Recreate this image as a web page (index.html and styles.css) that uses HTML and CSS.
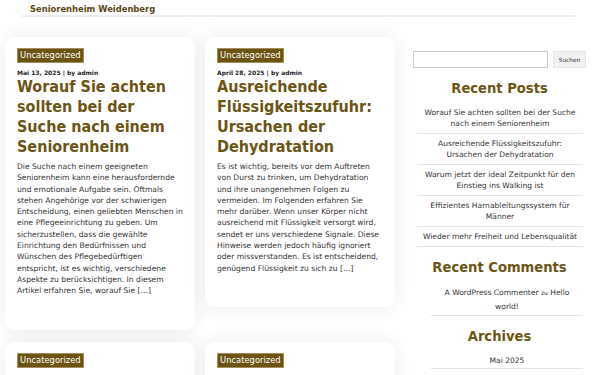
FILE: index.html
```html
<!DOCTYPE html>
<html>
<head>
  <meta charset="utf-8">
  <link rel="stylesheet" href="styles.css">
</head>
<body>
  <header class="site-header">
    <a class="site-title">Seniorenheim Weidenberg</a>
  </header>

  <div class="wrap">
    <main class="posts">
      <article class="card">
        <a class="cat">Uncategorized</a>
        <div class="meta">Mai 13, 2025 | by admin</div>
        <h2 class="post-title">Worauf Sie achten sollten bei der Suche nach einem Seniorenheim</h2>
        <p class="excerpt">Die Suche nach einem geeigneten Seniorenheim kann eine herausfordernde und emotionale Aufgabe sein. Oftmals stehen Angehörige vor der schwierigen Entscheidung, einen geliebten Menschen in eine Pflegeeinrichtung zu geben. Um sicherzustellen, dass die gewählte Einrichtung den Bedürfnissen und Wünschen des Pflegebedürftigen entspricht, ist es wichtig, verschiedene Aspekte zu berücksichtigen. In diesem Artikel erfahren Sie, worauf Sie […]</p>
      </article>

      <article class="card">
        <a class="cat">Uncategorized</a>
        <div class="meta">April 28, 2025 | by admin</div>
        <h2 class="post-title">Ausreichende Flüssigkeitszufuhr: Ursachen der Dehydratation</h2>
        <p class="excerpt">Es ist wichtig, bereits vor dem Auftreten von Durst zu trinken, um Dehydratation und ihre unangenehmen Folgen zu vermeiden. Im Folgenden erfahren Sie mehr darüber. Wenn unser Körper nicht ausreichend mit Flüssigkeit versorgt wird, sendet er uns verschiedene Signale. Diese Hinweise werden jedoch häufig ignoriert oder missverstanden. Es ist entscheidend, genügend Flüssigkeit zu sich zu […]</p>
      </article>

      <article class="card">
        <a class="cat">Uncategorized</a>
        <div class="meta">April 14, 2025 | by admin</div>
        <h2 class="post-title">Warum jetzt der ideal Zeitpunkt für den Einstieg ins Walking ist</h2>
      </article>

      <article class="card">
        <a class="cat">Uncategorized</a>
        <div class="meta">März 30, 2025 | by admin</div>
        <h2 class="post-title">Effizientes Harnableitungssystem für Männer</h2>
      </article>
    </main>

    <aside class="sidebar">
      <form class="search">
        <input type="text" class="search-field">
        <button type="button" class="search-btn">Suchen</button>
      </form>

      <h3 class="widget-title">Recent Posts</h3>
      <ul class="widget-list">
        <li>Worauf Sie achten sollten bei der Suche nach einem Seniorenheim</li>
        <li>Ausreichende Flüssigkeitszufuhr: Ursachen der Dehydratation</li>
        <li>Warum jetzt der ideal Zeitpunkt für den Einstieg ins Walking ist</li>
        <li>Effizientes Harnableitungssystem für Männer</li>
        <li>Wieder mehr Freiheit und Lebensqualität</li>
      </ul>

      <h3 class="widget-title">Recent Comments</h3>
      <ul class="widget-list inset">
        <li class="comment">A WordPress Commenter <span class="small">zu</span> Hello world!</li>
      </ul>

      <h3 class="widget-title">Archives</h3>
      <ul class="widget-list inset">
        <li>Mai 2025</li>
        <li>April 2025</li>
      </ul>
    </aside>
  </div>
</body>
</html>
```

FILE: styles.css
```css
body {
  margin: 0;
  background: #fff;
  font-family: "DejaVu Sans", sans-serif;
  color: #333;
  overflow: hidden;
}
.site-header {
  margin: 0 25px 0 22px;
  padding: 4px 8px 0;
  border-bottom: 2px solid #eee;
}
.site-title {
  display: block;
  font-size: 8.4px;
  line-height: 11px;
  font-weight: bold;
  color: #5a4816;
}
.wrap {
  display: flex;
  padding: 20px 14px 0 5px;
  gap: 18px;
}
.posts {
  width: 390px;
  flex: none;
  display: grid;
  grid-template-columns: 190px 190px;
  column-gap: 10px;
  row-gap: 12px;
  align-items: start;
}
.card {
  background: #fff;
  border-radius: 10px;
  box-shadow: 0 0 20px rgba(40, 40, 80, 0.09);
  padding: 11px 10px 33px 12px;
}
.cat {
  display: block;
  width: fit-content;
  background: #6b5412;
  border: 1px solid #a3905c;
  color: #fff;
  font-size: 8.4px;
  line-height: 13px;
  padding: 0 2px;
}
.meta {
  font-size: 6px;
  font-weight: bold;
  color: #222;
  margin-top: 6px;
  line-height: 8px;
}
.post-title {
  font-family: "DejaVu Sans Condensed", "DejaVu Sans", sans-serif;
  font-stretch: condensed;
  font-size: 16px;
  line-height: 20px;
  font-weight: bold;
  color: #6b5514;
  margin: 0;
}
.excerpt {
  font-size: 7.6px;
  line-height: 11.3px;
  margin: 4px 0 0;
}
.sidebar {
  flex: 1;
}
.search {
  display: flex;
  gap: 5px;
  margin: 14px 0 0;
}
.search-field {
  width: 135px;
  height: 17px;
  box-sizing: border-box;
  border: 1px solid #ccc;
  margin: 0;
}
.search-btn {
  width: 33px;
  height: 17px;
  box-sizing: border-box;
  border: 1px solid #e6e6e6;
  background: #f1f1f1;
  font-family: "DejaVu Sans", sans-serif;
  font-size: 5.8px;
  color: #333;
  padding: 0;
}
.widget-title {
  font-family: "DejaVu Sans Condensed", "DejaVu Sans", sans-serif;
  font-stretch: condensed;
  text-align: center;
  font-size: 14.6px;
  line-height: 20px;
  color: #6b5514;
  margin: 10px 0 5px;
}
.widget-list {
  list-style: none;
  margin: 0 3px 0 4px;
  padding: 0;
}
.widget-list.inset {
  margin-left: 18px;
}
.widget-list li {
  text-align: center;
  font-size: 7.55px;
  line-height: 11px;
  padding: 4px 4px;
  border-bottom: 1px solid #e3e3e3;
}
.widget-list .comment {
  line-height: 14px;
  padding-bottom: 1px;
}
.small {
  font-size: 6px;
  line-height: 1;
}
.inset li:not(.comment) {
  padding-bottom: 2px;
}
```
